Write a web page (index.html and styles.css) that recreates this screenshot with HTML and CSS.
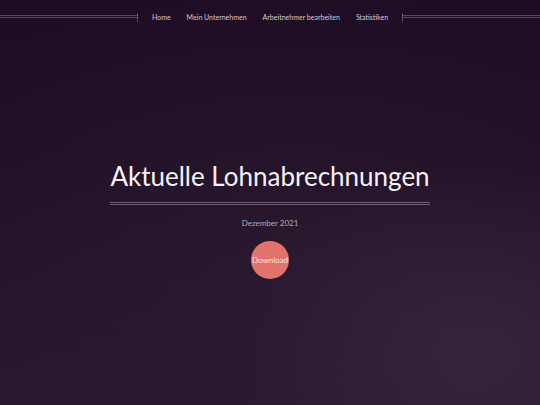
FILE: index.html
```html
<!DOCTYPE html>
<html lang="de">
<head>
<meta charset="utf-8">
<title>Lohnabrechnungen</title>
<link rel="stylesheet" href="styles.css">
</head>
<body>
<div class="page">
  <header class="topbar">
    <span class="rule rule-left"></span>
    <nav class="nav">
      <a href="#">Home</a>
      <a href="#">Mein Unternehmen</a>
      <a href="#">Arbeitnehmer bearbeiten</a>
      <a href="#">Statistiken</a>
    </nav>
    <span class="rule rule-right"></span>
  </header>
  <main class="hero">
    <h1 class="title">Aktuelle Lohnabrechnungen</h1>
    <p class="subtitle">Dezember 2021</p>
    <a class="download" href="#">Download</a>
  </main>
</div>
</body>
</html>
```
FILE: styles.css
```css
html, body {
  margin: 0;
  padding: 0;
  height: 100%;
}
body {
  font-family: "Lato", "Open Sans", sans-serif;
  color: #f2ecf2;
  background-color: #200f26;
  background-image:
    radial-gradient(ellipse 240px 190px at 480px 350px, rgba(66, 48, 68, 0.5), rgba(66, 48, 68, 0) 100%),
    radial-gradient(ellipse 420px 280px at 300px 250px, rgba(56, 38, 58, 0.3), rgba(56, 38, 58, 0) 100%),
    linear-gradient(180deg, #1d0c23 0%, #210f27 40%, #281830 100%);
}
.page {
  width: 540px;
  height: 405px;
  display: flex;
  flex-direction: column;
  overflow: hidden;
}
.topbar {
  display: flex;
  align-items: center;
  height: 33px;
}
.rule {
  flex: 1;
  height: 3px;
  border-top: 1px solid rgba(170, 140, 175, 0.45);
  border-bottom: 1px solid rgba(170, 140, 175, 0.45);
  box-sizing: border-box;
  position: relative;
}
.rule-left::after, .rule-right::before {
  content: "";
  position: absolute;
  top: -3px;
  width: 1px;
  height: 9px;
  background: rgba(170, 140, 175, 0.45);
}
.rule-left::after { right: 0; }
.rule-right::before { left: 0; }
.nav {
  display: flex;
  padding: 0 6px;
}
.nav a {
  font-size: 7px;
  color: #d4c8d8;
  text-decoration: none;
  padding: 0 8px;
}
.hero {
  display: flex;
  flex-direction: column;
  align-items: center;
  padding-top: 126px;
}
.title {
  margin: 0;
  font-weight: 400;
  font-size: 26px;
  line-height: 34px;
  color: #f6f2f6;
  padding: 0 0 9px;
  border-bottom: 3px double rgba(175, 150, 180, 0.55);
}
.subtitle {
  margin: 13px 0 0;
  font-size: 8px;
  color: #b4a8b6;
}
.download {
  margin-top: 13px;
  width: 38px;
  height: 38px;
  border-radius: 50%;
  background: #e0736a;
  color: #fbe9e6;
  font-size: 8px;
  display: flex;
  align-items: center;
  justify-content: center;
  text-decoration: none;
}
```
